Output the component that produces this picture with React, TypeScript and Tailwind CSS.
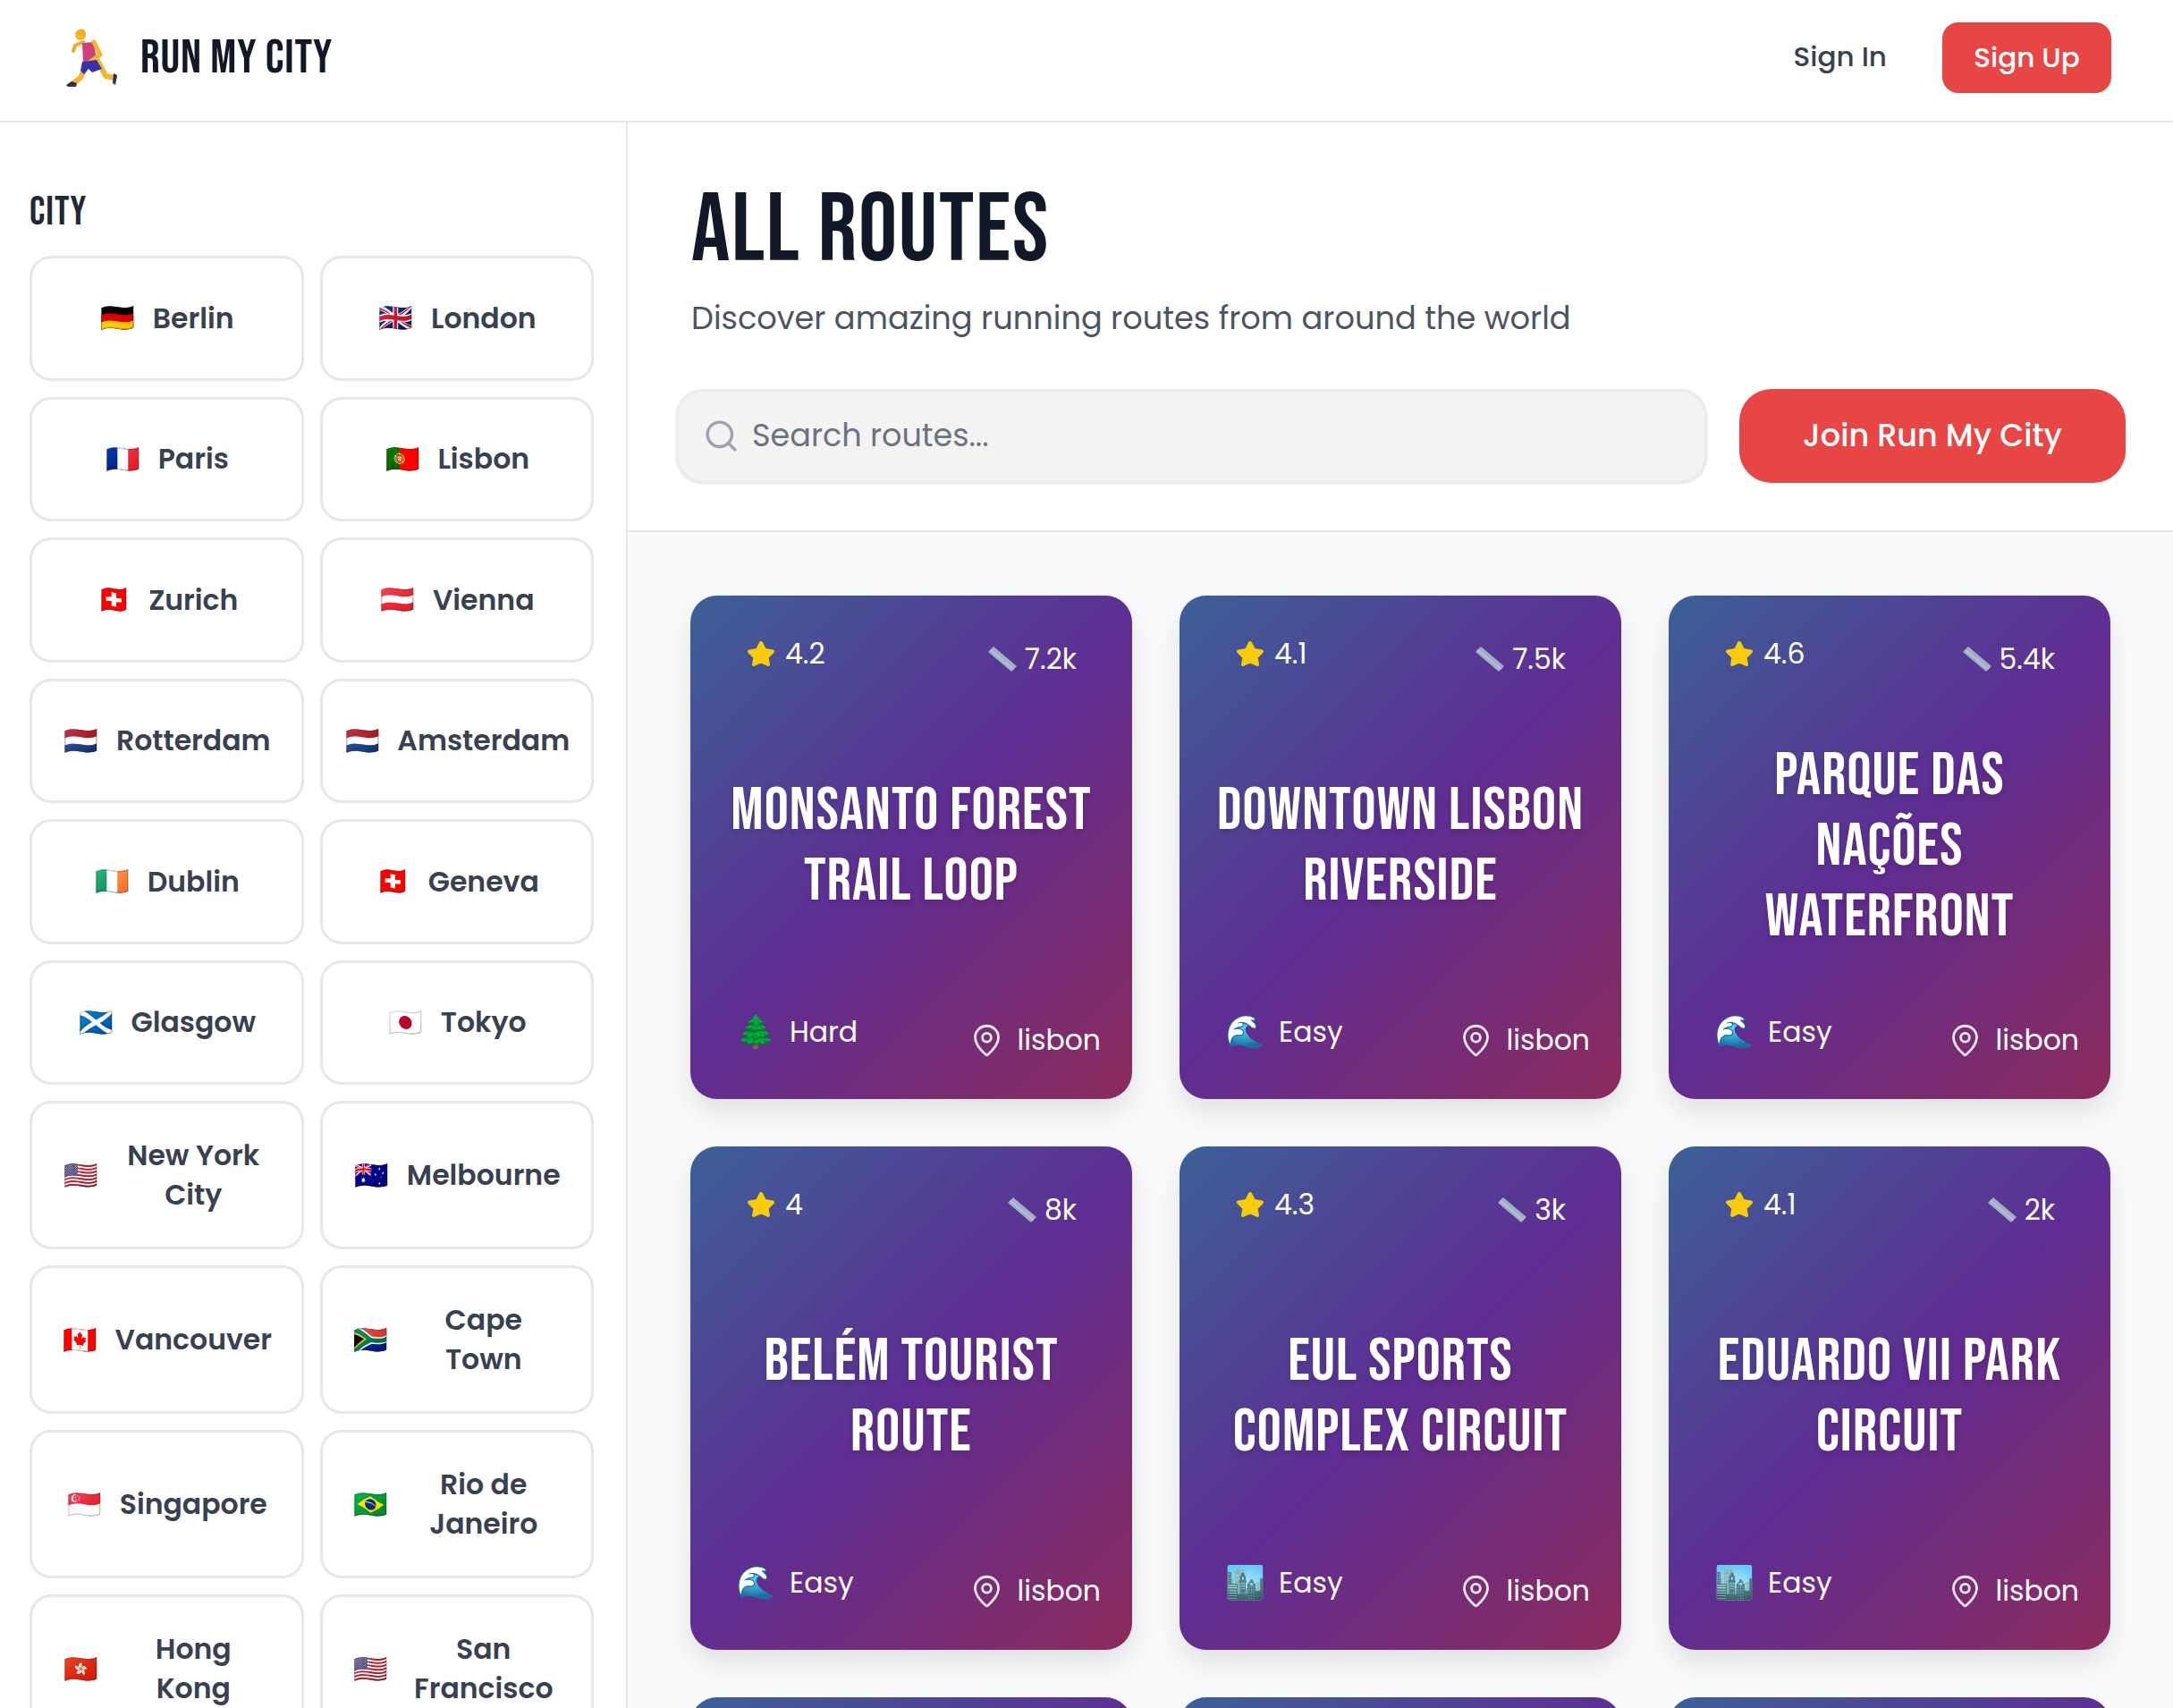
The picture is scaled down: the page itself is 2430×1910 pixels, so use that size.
import { MapPin, Search } from 'lucide-react'

const cities = [
  { flag: '🇩🇪', name: 'Berlin' },
  { flag: '🇬🇧', name: 'London' },
  { flag: '🇫🇷', name: 'Paris' },
  { flag: '🇵🇹', name: 'Lisbon' },
  { flag: '🇨🇭', name: 'Zurich' },
  { flag: '🇦🇹', name: 'Vienna' },
  { flag: '🇳🇱', name: 'Rotterdam' },
  { flag: '🇳🇱', name: 'Amsterdam' },
  { flag: '🇮🇪', name: 'Dublin' },
  { flag: '🇨🇭', name: 'Geneva' },
  { flag: '🏴󠁧󠁢󠁳󠁣󠁴󠁿', name: 'Glasgow' },
  { flag: '🇯🇵', name: 'Tokyo' },
  { flag: '🇺🇸', name: 'New York City' },
  { flag: '🇦🇺', name: 'Melbourne' },
  { flag: '🇨🇦', name: 'Vancouver' },
  { flag: '🇿🇦', name: 'Cape Town' },
  { flag: '🇸🇬', name: 'Singapore' },
  { flag: '🇧🇷', name: 'Rio de Janeiro' },
  { flag: '🇭🇰', name: 'Hong Kong' },
  { flag: '🇺🇸', name: 'San Francisco' },
]

const routes = [
  { rating: '4.2', distance: '7.2k', title: 'Monsanto Forest Trail Loop', icon: '🌲', level: 'Hard' },
  { rating: '4.1', distance: '7.5k', title: 'Downtown Lisbon Riverside', icon: '🌊', level: 'Easy' },
  { rating: '4.6', distance: '5.4k', title: 'Parque das Nações Waterfront', icon: '🌊', level: 'Easy' },
  { rating: '4', distance: '8k', title: 'Belém Tourist Route', icon: '🌊', level: 'Easy' },
  { rating: '4.3', distance: '3k', title: 'EUL Sports Complex Circuit', icon: '🏙️', level: 'Easy' },
  { rating: '4.1', distance: '2k', title: 'Eduardo VII Park Circuit', icon: '🏙️', level: 'Easy' },
]

const cardBg = 'bg-[linear-gradient(135deg,#3c6097_0%,#5f2d93_50%,#8c2b5c_100%)]'

// logo runner, drawn because the emoji font here has a different one
const Runner = () => (
  <svg viewBox="70 30 62 68" className="w-[62px] h-[68px]">
    <path d="M110 68 L118 84 L128 86" fill="none" stroke="#f5b52e" strokeWidth="6" strokeLinecap="round" strokeLinejoin="round" />
    <path d="M96 74 L90 86 L82 92" fill="none" stroke="#f5b52e" strokeWidth="6" strokeLinecap="round" strokeLinejoin="round" />
    <path d="M93 46 L84 50 L82 56" fill="none" stroke="#f0a92a" strokeWidth="4" strokeLinecap="round" strokeLinejoin="round" />
    <path d="M92 47 L105 46 L108 67 L93 68 Z" fill="#cf3f78" />
    <path d="M105 46 L112 60 L101 68" fill="none" stroke="#f5b52e" strokeWidth="5" strokeLinecap="round" strokeLinejoin="round" />
    <path d="M92 68 L108 66 L114 76 L103 80 L99 76 L94 82 L90 78 Z" fill="#3734a8" />
    <circle cx="90" cy="38" r="6" fill="#f5b52e" />
    <path d="M85 36 Q88 30 94 32 Q97 36 94 42 Q92 36 85 36 Z" fill="#edae2a" />
    <path d="M74 94 L80 90 L86 92 L85 96 L76 96 Z" fill="#2c3445" />
    <path d="M127 81 L131 83 L129 94 L126 92 Z" fill="#2c3445" />
  </svg>
)

const Star = () => (
  <svg viewBox="0 0 32 30" className="w-8 h-[30px] shrink-0">
    <path d="M16 3 L20 11 L29 12.5 L22.5 19 L24 27 L16 23.5 L8 27 L9.5 19 L3 12.5 L12 11 Z" fill="#f8cc0a" stroke="#f8cc0a" strokeWidth="4" strokeLinejoin="round" />
  </svg>
)

const Ruler = () => (
  <svg viewBox="0 0 32 28" className="w-8 h-7 shrink-0">
    <path d="M6 0 L32 22 L26 28 L0 6 Z" fill="#9fb0c6" />
    <path d="M3 3 L29 25 L28 26 L2 4 Z" fill="#b9c6d6" />
  </svg>
)

const RouteCard = ({ route }: { route: (typeof routes)[number] }) => (
  <div className={`${cardBg} h-[563px] rounded-[30px] shadow-[0_15px_30px_rgba(0,0,0,0.1)] flex flex-col text-white`}>
    <div className="flex justify-between items-start pl-[63px] pr-[62px] pt-[47px] text-[31.5px] leading-[36px]">
      <div className="flex items-center gap-[11px]">
        <Star />
        <span>{route.rating}</span>
      </div>
      <div className="flex items-center gap-[9px] mt-[6px]">
        <Ruler />
        <span>{route.distance}</span>
      </div>
    </div>
    <div className="flex-1 flex items-center justify-center px-9 pb-[6px]">
      <h3 className="font-['Bebas_Neue',sans-serif] text-[67.5px] leading-[79px] tracking-[1.1px] text-center uppercase [text-shadow:0_3px_6px_rgba(0,0,0,0.15)]">
        {route.title}
      </h3>
    </div>
    <div className="flex justify-between items-start pl-[51px] pr-[35px] pb-[46px] text-[31.5px] leading-[40px]">
      <div className="flex items-center gap-[18px] -mt-[9px]">
        <span className="w-[42px] text-center text-[36px]">{route.icon}</span>
        <span>{route.level}</span>
      </div>
      <div className="flex items-center gap-[14px]">
        <MapPin size={39} strokeWidth={1.7} className="text-white/90" />
        <span>lisbon</span>
      </div>
    </div>
  </div>
)

export default function App() {
  return (
    <div className="h-[1910px] overflow-hidden bg-white font-['Poppins',sans-serif]">
      <header className="h-[137px] border-b-2 border-[#e5e7eb] flex items-center justify-between pl-[70px] pr-[69px] pb-[6px]">
        <div className="flex items-center gap-[25px]">
          <Runner />
          <span className="font-['Bebas_Neue',sans-serif] text-[54px] leading-none tracking-[0.8px] text-[#111827]">RUN MY CITY</span>
        </div>
        <div className="flex items-center gap-[62px]">
          <a className="text-[31px] font-medium text-[#374151] -mt-[2px]">Sign In</a>
          <a className="h-[79px] w-[189px] rounded-[18px] bg-[#e84545] text-white text-[31px] font-medium flex items-center justify-center">Sign Up</a>
        </div>
      </header>

      <div className="flex">
        <aside className="w-[702px] shrink-0 border-r-2 border-[#e5e7eb] pl-[33px] pr-[36px] pt-[78px]">
          <h2 className="font-['Bebas_Neue',sans-serif] text-[45px] leading-[45px] tracking-[1px] text-[#1f2937] mb-[26px]">CITY</h2>
          <div className="grid grid-cols-2 gap-[18px]">
            {cities.map((city) => (
              <button
                key={city.name}
                className="min-h-[139.5px] border-[3px] border-[#e5e7eb] rounded-[24px] px-[33px] py-9 flex items-center justify-center gap-[18px] bg-white text-[#374151]"
              >
                <span className="w-[42px] shrink-0 text-center text-[31px] leading-none">{city.flag}</span>
                <span className="text-[31.5px] leading-[44px] font-semibold text-center">{city.name}</span>
              </button>
            ))}
          </div>
        </aside>

        <main className="flex-1 min-w-0">
          <section className="h-[458px] border-b-2 border-[#e5e7eb] pl-[54px] pr-[53px] pt-[68px]">
            <div className="ml-[17px]">
              <h1 className="font-['Bebas_Neue',sans-serif] text-[108px] leading-[108px] tracking-[1.7px] text-[#111827]">ALL ROUTES</h1>
              <p className="mt-[16px] text-[35.2px] leading-[54px] text-[#4b5563]">Discover amazing running routes from around the world</p>
            </div>
            <div className="flex gap-[36px] mt-[52px]">
              <div className="flex-1 h-[105px] rounded-[30px] bg-[#f3f3f3] border-[3px] border-[#ececec] shadow-sm flex items-center pl-[27px] gap-[14px]">
                <Search size={41} strokeWidth={2} className="text-[#9ca3af]" />
                <span className="text-[35px] text-[#6b7280]">Search routes...</span>
              </div>
              <button className="w-[432px] h-[105px] rounded-[36px] bg-[#e84545] text-white text-[35px] font-medium">Join Run My City</button>
            </div>
          </section>

          <section className="bg-[#f9fafb] px-[70px] pt-[71px] pb-10">
            <div className="grid grid-cols-3 gap-x-[53px] gap-y-[53px]">
              {routes.map((route) => (
                <RouteCard key={route.title} route={route} />
              ))}
              <div className={`${cardBg} h-[563px] rounded-[30px]`} />
              <div className={`${cardBg} h-[563px] rounded-[30px]`} />
              <div className={`${cardBg} h-[563px] rounded-[30px]`} />
            </div>
          </section>
        </main>
      </div>
    </div>
  )
}
